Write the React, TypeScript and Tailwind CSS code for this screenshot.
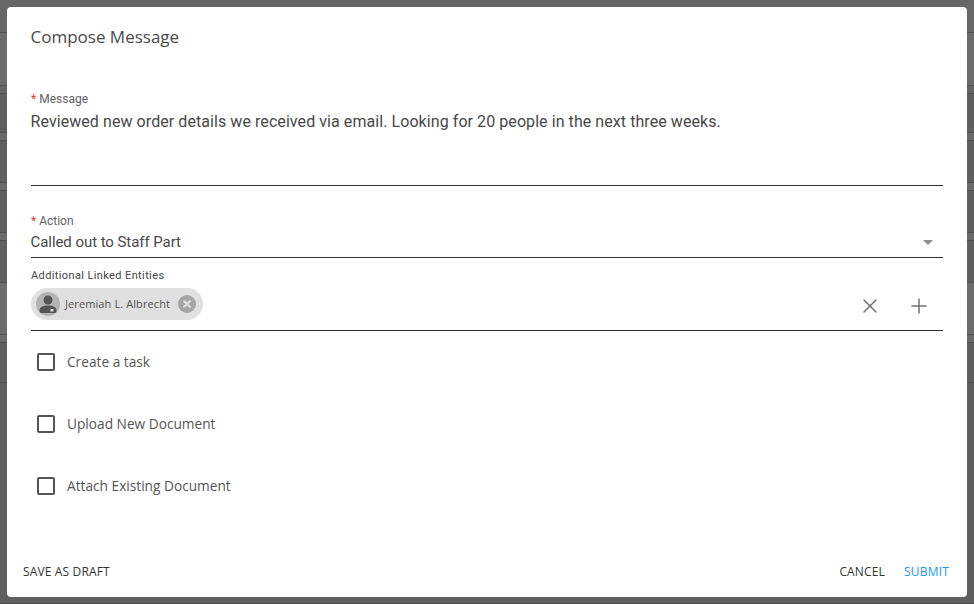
// Compose message dialog on top of a dimmed list page
import { useState } from 'react';
import { X, Plus } from 'lucide-react';

const backdropRows = [
  { h: 'h-[33px]', bg: 'bg-[#666666]' },
  { h: 'h-[53px]', bg: 'bg-[#6c6c6c]' },
  { h: 'h-[8px]', bg: 'bg-[#666666]' },
  { h: 'h-[39px]', bg: 'bg-[#5f5f5f]' },
  { h: 'h-[8px]', bg: 'bg-[#6a6a6a]' },
  { h: 'h-[42px]', bg: 'bg-[#5f5f5f]' },
  { h: 'h-[8px]', bg: 'bg-[#6a6a6a]' },
  { h: 'h-[42px]', bg: 'bg-[#5f5f5f]' },
  { h: 'h-[8px]', bg: 'bg-[#6a6a6a]' },
  { h: 'h-[42px]', bg: 'bg-[#5f5f5f]' },
  { h: 'h-[52px]', bg: 'bg-[#6c6c6c]' },
  { h: 'h-[8px]', bg: 'bg-[#6a6a6a]' },
  { h: 'h-[40px]', bg: 'bg-[#5f5f5f]' },
  { h: 'h-[221px]', bg: 'bg-[#5f5f5f]' },
];

function CheckRow({ label }: { label: string }) {
  const [checked, setChecked] = useState(false);
  return (
    <label className="flex h-[62px] items-center pl-[6px]">
      <input
        type="checkbox"
        checked={checked}
        onChange={() => setChecked(!checked)}
        className="h-[18px] w-[18px] appearance-none rounded-[2px] border-2 border-[#555555] bg-white"
      />
      <span className="ml-[12px] font-['Open_Sans',sans-serif] text-[13.7px] text-[#555555]">{label}</span>
    </label>
  );
}

function Avatar() {
  return (
    <svg width="24" height="24" viewBox="0 0 24 24">
      <circle cx="12" cy="12" r="12" fill="#b4b4b4" />
      <circle cx="12" cy="8" r="4.500" fill="#555555" />
      <path d="M3.500 19c0-4 3-5.500 8.500-5.500s8.500 1.500 8.500 5.500c0 1.500-1 2-2 2H5.500c-1 0-2-.5-2-2z" fill="#555555" />
      <rect x="14.500" y="17" width="3" height="2.500" fill="#dddddd" />
    </svg>
  );
}

function ChipClose() {
  return (
    <svg width="18" height="18" viewBox="0 0 18 18">
      <circle cx="9" cy="9" r="9" fill="#a6a6a6" />
      <path d="M5.500 5.500l7 7M12.500 5.500l-7 7" stroke="#e0e0e0" strokeWidth="2" />
    </svg>
  );
}

export default function App() {
  return (
    <div className="relative h-[604px] w-[974px] overflow-hidden font-['Roboto',sans-serif]">
      <div className="flex flex-col">
        {backdropRows.map((r, i) => (
          <div key={i} className={`${r.h} ${r.bg} border-b border-[#4f4f4f]`} />
        ))}
      </div>

      <div className="absolute left-[7px] top-[7px] flex h-[590px] w-[960px] flex-col rounded-[4px] bg-white">
        <h2 className="pl-[23.500px] pt-[18px] font-['Open_Sans',sans-serif] text-[17px] leading-[24px] text-[#4a4a4a]">
          Compose Message
        </h2>

        <div className="mt-[42px] px-[24px]">
          <div className="h-[95px] border-b border-[#333333]">
            <div className="text-[12px] leading-[16px] text-[#616161]">
              <span className="text-[#e53935]">*</span> Message
            </div>
            <p className="mt-[4px] -ml-[0.500px] text-[16px] leading-[22px] tracking-[0.07px] text-[#484848]">
              Reviewed new order details we received via email. Looking for 20 people in the next three weeks.
            </p>
          </div>

          <div className="mt-[27px] h-[45px] border-b border-[#333333]">
            <div className="text-[12px] leading-[16px] text-[#616161]">
              <span className="text-[#e53935]">*</span> Action
            </div>
            <div className="flex items-center justify-between pr-[10px]">
              <span className="-ml-[0.500px] text-[15px] leading-[26px] tracking-[-0.06px] text-[#484848]">Called out to Staff Part</span>
              <div className="h-0 w-0 border-x-[5.500px] border-t-[5.500px] border-x-transparent border-t-[#8c8c8c]" />
            </div>
          </div>

          <div className="mt-[10px] h-[63px] border-b border-[#333333]">
            <div className="text-[11px] leading-[16px] tracking-[0.38px] text-[#444444]">Additional Linked Entities</div>
            <div className="mt-[4px] flex items-center justify-between">
              <div className="flex h-[32px] items-center rounded-full bg-[#e0e0e0] pl-[5px] pr-[7px]">
                <Avatar />
                <span className="ml-[5px] mr-[8px] font-['Open_Sans',sans-serif] text-[11px] tracking-[0.1px] text-[#555555]">
                  Jeremiah L. Albrecht
                </span>
                <ChipClose />
              </div>
              <div className="mt-[3px] flex items-center gap-[25px] pr-[12px]">
                <X size={24} strokeWidth={1.500} className="text-[#707070]" />
                <Plus size={24} strokeWidth={1.500} className="text-[#707070]" />
              </div>
            </div>
          </div>

          <div>
            <CheckRow label="Create a task" />
            <CheckRow label="Upload New Document" />
            <CheckRow label="Attach Existing Document" />
          </div>
        </div>

        <div className="mt-auto flex items-center justify-between pb-[17px] pl-[16px] pr-[18px] font-['Open_Sans',sans-serif] text-[12px] leading-[16px]">
          <button className="tracking-[0.15px] text-[#333333]">SAVE AS DRAFT</button>
          <div className="flex gap-[19px]">
            <button className="tracking-[0.15px] text-[#333333]">CANCEL</button>
            <button className="tracking-[0.2px] text-[#2196f3]">SUBMIT</button>
          </div>
        </div>
      </div>
    </div>
  );
}
